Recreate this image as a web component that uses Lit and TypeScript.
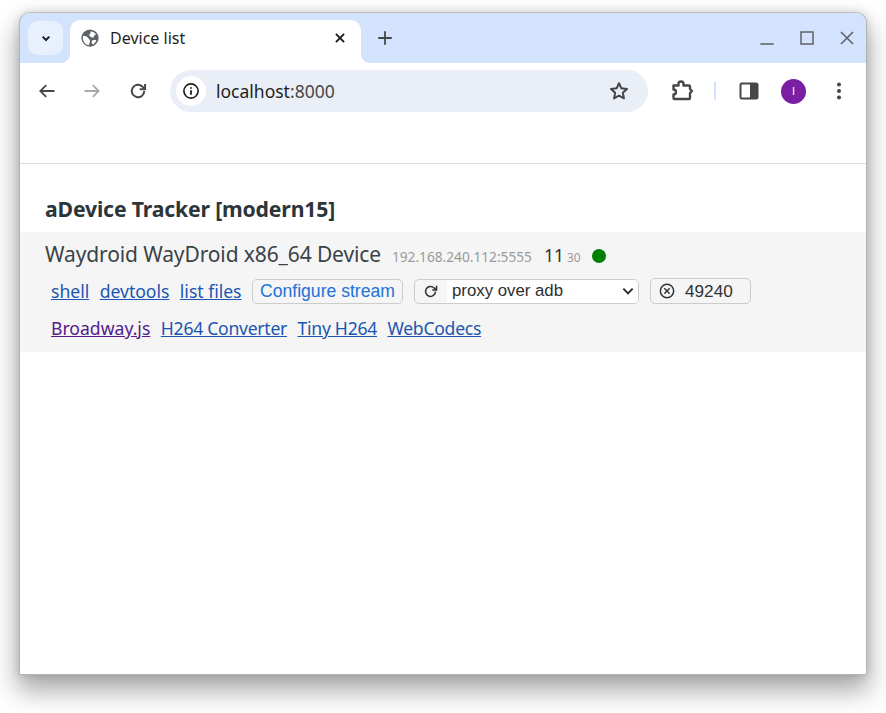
import { LitElement, html, css, svg } from "lit";
import { customElement } from "lit/decorators.js";

const ic = (body: unknown, cls = "", vb = "0 0 24 24") =>
  html`<svg class=${cls} viewBox=${vb} fill="none" stroke="currentColor" stroke-width="2.2">${body}</svg>`;

@customElement("app-root")
export class AppRoot extends LitElement {
  static styles = css`
    :host { display: block; height: 713px; padding: 12px 19px 0 19px; box-sizing: border-box; background: #fff; font-family: "Noto Sans", sans-serif; overflow: hidden; }
    svg { display: block; flex: none; }
    .win { height: 663px; box-sizing: border-box; border: 1px solid #b4b4b4; border-top-color: #c0c0c0; border-radius: 11px 11px 0 0; background: #fff; box-shadow: 0 14px 26px 2px rgba(0,0,0,.34), 0 0 10px rgba(0,0,0,.14); display: flex; flex-direction: column; overflow: hidden; }
    .strip { height: 50px; background: #d3e3fd; display: flex; align-items: flex-start; flex: none; }
    .tabsel { width: 35px; height: 34px; margin: 8px 7px 0 8px; border-radius: 10px; background: #e8f0fe; color: #1f1f1f; display: flex; align-items: center; justify-content: center; }
    .tabsel svg { width: 16px; height: 16px; }
    .tab { position: relative; width: 291px; height: 43px; margin-top: 7px; box-sizing: border-box; padding: 0 14px 8px 11px; background: #fff; border-radius: 10px 10px 0 0; display: flex; align-items: center; color: #1f1f1f; font-size: 16px; }
    .tab::before, .tab::after { content: ""; position: absolute; bottom: 0; width: 10px; height: 10px; }
    .tab::before { left: -10px; background: radial-gradient(circle at 0 0, #d3e3fd 10px, #fff 10.5px); }
    .tab::after { right: -10px; background: radial-gradient(circle at 100% 0, #d3e3fd 10px, #fff 10.5px); }
    .globe { width: 18px; height: 18px; color: #5f6368; margin-right: 11px; }
    .tabtitle { flex: 1; }
    .tabx { width: 14px; height: 14px; }
    .plus { width: 18px; height: 18px; margin: 16px 0 0 15px; color: #444746; }
    .spacer { flex: 1; }
    .winbtns { display: flex; color: #5c5f62; gap: 24px; margin: 17px 11px 0 0; align-items: center; }
    .winbtns svg { width: 16px; height: 16px; }
    .toolbar { height: 56px; flex: none; background: #fff; border-radius: 8px 8px 0 0; display: flex; align-items: center; color: #474747; position: relative; margin-top: 0; }
    .navbtn { width: 20px; height: 20px; margin-left: 17px; margin-right: 8px; }
    .nav2 { margin-left: 17px; margin-right: 0; color: #a9a9a9; }
    .nav3 { margin-left: 26px; margin-right: 0; }
    .omni { width: 478px; height: 42px; margin-left: 22px; background: #e9eef7; border-radius: 21px; display: flex; align-items: center; box-sizing: border-box; padding: 0 18px 0 6px; font-size: 17.500px; color: #1f1f1f; }
    .info { width: 30px; height: 30px; border-radius: 50%; background: #fff; display: flex; align-items: center; justify-content: center; margin-right: 10px; color: #1f1f1f; }
    .info svg { width: 18px; height: 18px; }
    .url { flex: 1; }
    .url span { color: #474747; }
    .star { width: 22px; height: 22px; color: #444746; }
    .ext { width: 24px; height: 24px; margin-left: 22px; }
    .sep { width: 2px; height: 18px; background: #d3e3fd; margin: 0 23px 0 20px; }
    .side { width: 20px; height: 20px; }
    .avatar { width: 25px; height: 25px; border-radius: 50%; background: #7b1fa2; color: #fff; font: 11px "Liberation Sans", sans-serif; display: flex; align-items: center; justify-content: center; margin-left: 22px; }
    .dots { width: 18px; height: 20px; margin-left: 24px; color: #474747; }
    .bookmarks { height: 45px; flex: none; border-bottom: 1px solid #dedede; box-sizing: border-box; }
    .page { flex: 1; color: #2f3a3e; }
    h1 { margin: 0; padding: 31px 25px 0; height: 68px; box-sizing: border-box; font-size: 21.200px; line-height: 28px; font-weight: 700; color: #2c3539; letter-spacing: -.15px; }
    .device { background: #f5f5f5; height: 120px; box-sizing: border-box; padding-top: 7px; }
    .head { display: flex; align-items: baseline; padding-left: 25px; height: 30px; color: #3a4347; }
    .name { font-size: 21px; letter-spacing: -.12px; line-height: 30px; }
    .ip { font-size: 13.700px; color: #9a9a9a; margin-left: 11px; }
    .api { font-size: 17.500px; margin-left: 12px; color: #333; }
    .sdk { font-size: 12px; color: #9a9a9a; margin-left: 3px; }
    .dot { width: 14px; height: 14px; border-radius: 50%; background: #008000; margin-left: 11px; align-self: center; margin-top: 3px; }
    .row { display: flex; align-items: center; padding-left: 31px; }
    .r1 { margin-top: 9px; height: 26px; }
    .r2 { margin-top: 11px; height: 26px; }
    a { color: #1a56b0; font-size: 17.600px; letter-spacing: -.03px; text-decoration: underline; margin-right: 10.500px; }
    .r2 a { letter-spacing: -.28px; }
    .r2 a.seen { color: #551a8b; letter-spacing: 0; }
    .btn { height: 25px; box-sizing: border-box; border: 1px solid #ccc; border-radius: 5px; background: #f5f5f5; font: 17.600px "Liberation Sans", sans-serif; display: flex; align-items: center; }
    .cfg { color: #2272d8; width: 151px; justify-content: center; }
    .sel { width: 225px; margin-left: 11px; overflow: hidden; color: #2e2e2e; }
    .ref { width: 32px; height: 100%; display: flex; align-items: center; justify-content: center; color: #333; flex: none; }
    .ref svg { width: 17px; height: 17px; }
    .seli { flex: 1; height: 100%; background: #fff; display: flex; align-items: center; padding-left: 5px; font-size: 16.800px; }
    .chev { width: 14px; height: 14px; margin-right: 3px; }
    .port { width: 101px; height: 26px; margin-left: 11px; color: #333; font-size: 17.200px; padding-left: 8px; box-sizing: border-box; }
    .port svg { width: 16px; height: 16px; margin-right: 10px; }
  `;

  render() {
    return html`<div class="win">
      <div class="strip">
        <div class="tabsel">${ic(svg`<path d="M7 10l5 5 5-5" stroke-width="3"/>`)}</div>
        <div class="tab">
          <svg class="globe" viewBox="0 0 24 24"><circle cx="12" cy="12" r="11.500" fill="currentColor"/><path fill="#fff" d="M2.800 9c3.200 0 5.400 1 6.700 3 1 1.500 2.500 2 2.500 4 0 2-1 3-1.500 5.500C6 21 2.500 17 2.500 12c0-1 .1-2 .3-3zM13 3c3 .4 5.500 2 7 4.500l-2.500 1-1 3-3.500-1-2.500-2.500 2-2z"/><path fill="#fff" d="M15.500 14.500h5c-.8 2.800-2.500 4.800-5 6l-1.500-3z"/></svg>
          <span class="tabtitle">Device list</span>
          ${ic(svg`<path d="M5 5l14 14M19 5L5 19" stroke-width="3.400"/>`, "tabx")}
        </div>
        ${ic(svg`<path d="M12 3v18M3 12h18" stroke-width="2.400"/>`, "plus")}
        <div class="spacer"></div>
        <div class="winbtns">
          ${ic(svg`<path d="M2 21h20" stroke-width="2"/>`)}
          ${ic(svg`<rect x="3" y="3" width="18" height="18" stroke-width="2.200"/>`)}
          ${ic(svg`<path d="M3 3l18 18M21 3L3 21" stroke-width="2.200"/>`)}
        </div>
      </div>
      <div class="toolbar">
        ${ic(svg`<path d="M21 12H4M11 5l-7 7 7 7"/>`, "navbtn")}
        ${ic(svg`<path d="M3 12h17M13 5l7 7-7 7"/>`, "navbtn nav2")}
        ${ic(svg`<path d="M19.500 12a7.500 7.500 0 1 1-2.200-5.300L20 9.300" stroke-width="2.400"/><path d="M20.500 3.500v6.500H14" stroke-width="2.400"/>`, "navbtn nav3")}
        <div class="omni">
          <div class="info">${ic(svg`<circle cx="12" cy="12" r="9.500" stroke-width="2.200"/><path d="M12 11v6M12 7v2" stroke-width="2.400"/>`)}</div>
          <div class="url">localhost<span>:8000</span></div>
          ${ic(svg`<path d="M12 3.500l2.600 5.600 6.100.7-4.500 4.200 1.200 6-5.400-3-5.400 3 1.200-6-4.500-4.200 6.100-.7z" stroke-width="2.200" stroke-linejoin="round"/>`, "star")}
        </div>
        ${ic(svg`<path d="M3.500 6.500H8.500V5a2.500 2.500 0 0 1 5 0v1.500H19a1 1 0 0 1 1 1V10l2 2-2 2v5a1 1 0 0 1-1 1H4.500a1 1 0 0 1-1-1v-3.500c1.500 0 2.500-.8 2.500-2.500S5 10.500 3.500 10.500V7.500z" stroke-width="2.400" stroke-linejoin="round"/>`, "ext")}
        <div class="sep"></div>
        <svg class="side" viewBox="0 0 20 20"><rect x="1.500" y="2.500" width="17" height="15" rx="1.500" fill="none" stroke="currentColor" stroke-width="2"/><rect x="11" y="2.500" width="7.500" height="15" fill="currentColor"/></svg>
        <div class="avatar">I</div>
        <svg class="dots" viewBox="0 0 18 20" fill="currentColor"><circle cx="9" cy="3.500" r="2"/><circle cx="9" cy="10" r="2"/><circle cx="9" cy="16.500" r="2"/></svg>
      </div>
      <div class="bookmarks"></div>
      <div class="page">
        <h1>aDevice Tracker [modern15]</h1>
        <div class="device">
          <div class="head">
            <span class="name">Waydroid WayDroid x86_64 Device</span>
            <span class="ip">192.168.240.112:5555</span>
            <span class="api">11</span><span class="sdk">30</span>
            <span class="dot"></span>
          </div>
          <div class="row r1">
            <a href="#">shell</a><a href="#">devtools</a><a href="#">list files</a>
            <div class="btn cfg">Configure stream</div>
            <div class="btn sel">
              <div class="ref">${ic(svg`<path d="M19 12a7 7 0 1 1-2-5l3 2.500"/><path d="M20.500 4v6h-6"/>`)}</div>
              <div class="seli"><span class="spacer">proxy over adb</span>${ic(svg`<path d="M4 8l8 8 8-8" stroke-width="3.400"/>`, "chev")}</div>
            </div>
            <div class="btn port">${ic(svg`<circle cx="12" cy="12" r="10"/><path d="M8 8l8 8M16 8l-8 8"/>`)}49240</div>
          </div>
          <div class="row r2">
            <a class="seen" href="#">Broadway.js</a><a href="#">H264 Converter</a><a href="#">Tiny H264</a><a href="#">WebCodecs</a>
          </div>
        </div>
      </div>
    </div>`;
  }
}
